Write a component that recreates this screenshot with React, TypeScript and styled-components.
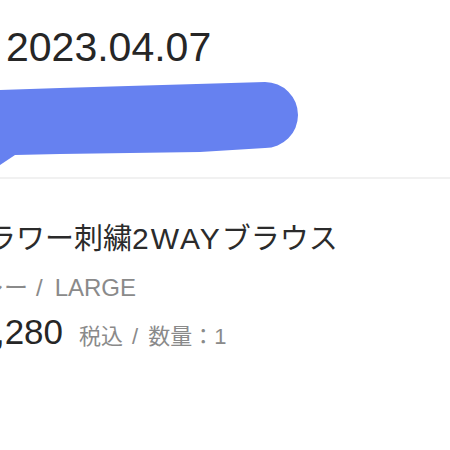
import * as React from 'react';
import styled, { createGlobalStyle } from 'styled-components';

const GlobalStyle = createGlobalStyle`
  html, body {
    margin: 0;
    padding: 0;
    background: #ffffff;
  }
  body {
    font-family: 'Liberation Sans', 'Noto Sans CJK JP', sans-serif;
    color: #262626;
    overflow: hidden;
  }
`;

const Page = styled.div`
  width: 450px;
  height: 450px;
  overflow: hidden;
  display: flex;
  flex-direction: column;
`;

const OrderHeader = styled.div`
  display: flex;
  flex-direction: column;
  padding: 23px 0 0 6px;
`;

const OrderDate = styled.div`
  font-size: 41px;
  line-height: 48px;
  color: #262626;
`;

const Redaction = styled.svg`
  display: block;
  margin-top: 11px;
`;

const Divider = styled.div`
  height: 2px;
  background: #f1f1f1;
  margin-top: 11px;
`;

const ProductInfo = styled.div`
  display: flex;
  flex-direction: column;
  padding-top: 42px;
  margin-left: -44px;
`;

const ProductName = styled.div`
  font-size: 29px;
  line-height: 36px;
  color: #2b2b2b;
  white-space: nowrap;
  padding-left: 2px;
`;

const Latin = styled.span`
  font-size: 30px;
  letter-spacing: 2px;
`;

const Variant = styled.div`
  font-size: 24px;
  line-height: 32px;
  color: #8a8a8a;
  margin-top: 15px;
  white-space: nowrap;
`;

const Sep = styled.span<{ $before: number; $after: number }>`
  margin: 0 ${(p) => p.$after}px 0 ${(p) => p.$before}px;
`;

const PriceRow = styled.div`
  display: flex;
  align-items: baseline;
  margin-top: 6px;
  white-space: nowrap;
`;

const Price = styled.span`
  font-size: 35px;
  line-height: 44px;
  color: #262626;
`;

const PriceNote = styled.span`
  font-size: 22px;
  color: #8a8a8a;
  margin-left: 16px;
`;

interface OrderItem {
  name: React.ReactNode;
  color: string;
  size: string;
  price: string;
  quantity: number;
}

const item: OrderItem = {
  name: (
    <>
      フラワー刺繍<Latin>2WAY</Latin>ブラウス
    </>
  ),
  color: 'グレー',
  size: 'LARGE',
  price: '¥1,280',
  quantity: 1,
};

export default function App() {
  return (
    <Page>
      <GlobalStyle />
      <OrderHeader>
        <OrderDate>2023.04.07</OrderDate>
      </OrderHeader>
      <Redaction width="300" height="84" viewBox="0 0 300 84">
        <path
          d="M0,8 L60,6 L265,0 A33,33 0 0 1 265,66 L200,70 L60,72 L15,73 L0,83 Z"
          fill="#6681f0"
        />
      </Redaction>
      <Divider />
      <ProductInfo>
        <ProductName>{item.name}</ProductName>
        <Variant>
          {item.color}
          <Sep $before={8} $after={12}>/</Sep>
          {item.size}
        </Variant>
        <PriceRow>
          <Price>{item.price}</Price>
          <PriceNote>
            税込<Sep $before={9} $after={10}>/</Sep>数量：{item.quantity}
          </PriceNote>
        </PriceRow>
      </ProductInfo>
    </Page>
  );
}
